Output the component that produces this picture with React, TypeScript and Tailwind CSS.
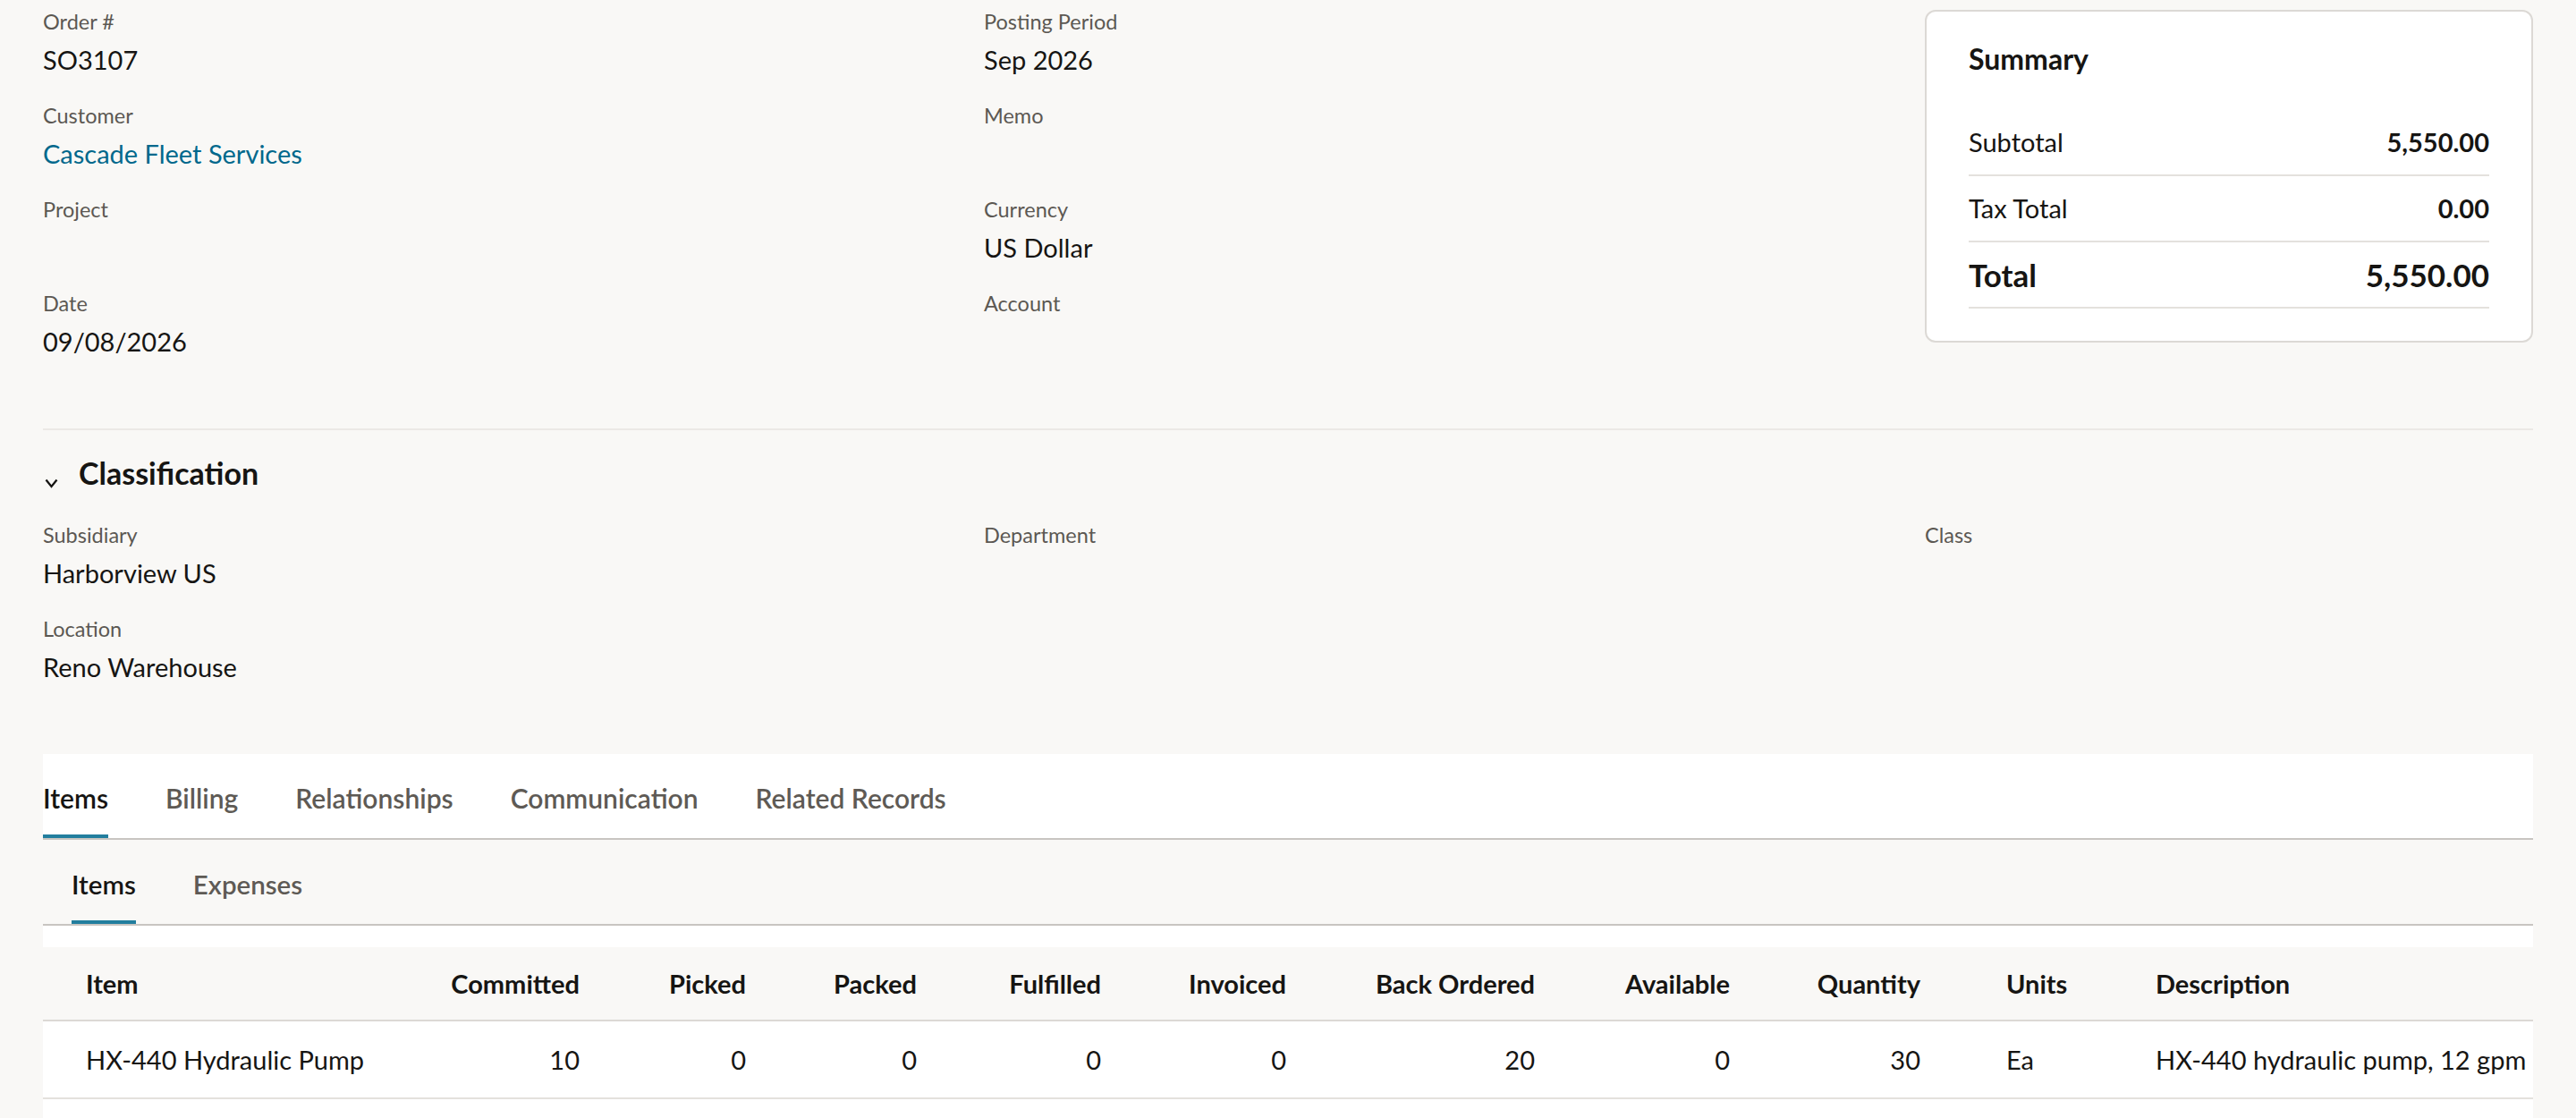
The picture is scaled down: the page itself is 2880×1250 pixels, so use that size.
import React, { useState } from 'react';

const font = "font-['Lato','Liberation_Sans',sans-serif]";

interface FieldProps {
  label: string;
  value?: string;
  link?: boolean;
}

const Field: React.FC<FieldProps> = ({ label, value, link }) => (
  <div className="mb-[26px]">
    <div className="text-[23.5px] leading-[32px] text-[#5c5853]">{label}</div>
    <div
      className={`mt-[7px] min-h-[40px] text-[29px] leading-[40px] ${
        link ? 'text-[#00688c]' : 'text-[#161513]'
      }`}
    >
      {value}
    </div>
  </div>
);

const SummaryRow: React.FC<{ label: string; value: string; total?: boolean }> = ({ label, value, total }) => (
  <div className="flex items-center justify-between border-b-2 border-[#e4e1dd] py-4">
    <span className={total ? 'text-[35px] leading-[40px] font-bold' : 'text-[29px] leading-[40px]'}>{label}</span>
    <span className={total ? 'text-[35px] leading-[40px] font-bold' : 'text-[29px] leading-[40px] font-bold'}>{value}</span>
  </div>
);

const columns = [
  { key: 'item', label: 'Item', width: 'w-[405px]', align: 'text-left' },
  { key: 'committed', label: 'Committed', width: 'w-[243px]', align: 'text-right' },
  { key: 'picked', label: 'Picked', width: 'w-[186px]', align: 'text-right' },
  { key: 'packed', label: 'Packed', width: 'w-[191px]', align: 'text-right' },
  { key: 'fulfilled', label: 'Fulfilled', width: 'w-[206px]', align: 'text-right' },
  { key: 'invoiced', label: 'Invoiced', width: 'w-[207px]', align: 'text-right' },
  { key: 'backOrdered', label: 'Back Ordered', width: 'w-[278px]', align: 'text-right' },
  { key: 'available', label: 'Available', width: 'w-[218px]', align: 'text-right' },
  { key: 'quantity', label: 'Quantity', width: 'w-[213px]', align: 'text-right' },
  { key: 'units', label: 'Units', width: 'w-[167px]', align: 'text-left' },
  { key: 'description', label: 'Description', width: 'w-[512px]', align: 'text-left' },
];

const lines: Record<string, string>[] = [
  {
    item: 'HX-440 Hydraulic Pump',
    committed: '10',
    picked: '0',
    packed: '0',
    fulfilled: '0',
    invoiced: '0',
    backOrdered: '20',
    available: '0',
    quantity: '30',
    units: 'Ea',
    description: 'HX-440 hydraulic pump, 12 gpm',
  },
];

const mainTabs = ['Items', 'Billing', 'Relationships', 'Communication', 'Related Records'];
const subTabs = ['Items', 'Expenses'];

export default function App() {
  const [tab, setTab] = useState('Items');
  const [subTab, setSubTab] = useState('Items');

  return (
    <div className={`min-h-screen bg-[#f9f8f6] px-12 pt-2 text-[#161513] ${font}`}>
      {/* Primary info */}
      <div className="grid grid-cols-[680px_680px_680px] justify-between">
        <div>
          <Field label="Order #" value="SO3107" />
          <Field label="Customer" value="Cascade Fleet Services" link />
          <Field label="Project" />
          <Field label="Date" value="09/08/2026" />
        </div>
        <div>
          <Field label="Posting Period" value="Sep 2026" />
          <Field label="Memo" />
          <Field label="Currency" value="US Dollar" />
          <Field label="Account" />
        </div>
        <div className="mt-[3px] self-start rounded-xl border-2 border-[#dcd9d5] bg-white px-[47px] pt-[33px] pb-[36px]">
          <h3 className="mb-[37px] text-[32px] leading-[40px] font-bold">Summary</h3>
          <SummaryRow label="Subtotal" value="5,550.00" />
          <SummaryRow label="Tax Total" value="0.00" />
          <SummaryRow label="Total" value="5,550.00" total />
        </div>
      </div>

      <div className="mt-[51px] h-[2px] bg-[#ebe9e6]" />

      {/* Classification */}
      <div className="mt-[28px] flex items-start gap-[23px]">
        <svg width="15" height="11" viewBox="0 0 15 11" className="mt-[26px] ml-[2px]">
          <path d="M1.5 1.5 L7.5 9 L13.5 1.5" fill="none" stroke="#161513" strokeWidth="2.3" />
        </svg>
        <h2 className="text-[34px] leading-[40px] font-bold">Classification</h2>
      </div>
      <div className="mt-[33px] grid grid-cols-[680px_680px_680px] justify-between">
        <div>
          <Field label="Subsidiary" value="Harborview US" />
          <Field label="Location" value="Reno Warehouse" />
        </div>
        <div>
          <Field label="Department" />
        </div>
        <div>
          <Field label="Class" />
        </div>
      </div>

      {/* Tabs */}
      <div className="mt-[51px] bg-white">
        <div className="flex gap-[64px] border-b-2 border-[#c8c5c1]">
          {mainTabs.map((t) => (
            <button
              key={t}
              onClick={() => setTab(t)}
              className={`h-[94px] border-b-4 pt-[7px] text-[30px] leading-[40px] font-semibold ${
                tab === t ? 'border-[#227e9e] text-[#161513]' : 'border-transparent text-[#5e5a55]'
              }`}
            >
              {t}
            </button>
          ))}
        </div>

        <div className="flex gap-[64px] border-b-2 border-[#c8c5c1] bg-[#f9f8f6] pl-8">
          {subTabs.map((t) => (
            <button
              key={t}
              onClick={() => setSubTab(t)}
              className={`h-[94px] border-b-4 pt-[10px] text-[29.5px] leading-[40px] font-semibold ${
                subTab === t ? 'border-[#227e9e] text-[#161513]' : 'border-transparent text-[#5e5a55]'
              }`}
            >
              {t}
            </button>
          ))}
        </div>

        <div className="overflow-hidden pt-6">
          <table className="w-[2826px] table-fixed border-collapse">
            <colgroup>
              {columns.map((c) => (
                <col key={c.key} className={c.width} />
              ))}
            </colgroup>
            <thead>
              <tr className="h-[82px] border-b-2 border-[#dcd9d5] bg-[#f9f8f6]">
                {columns.map((c) => (
                  <th key={c.key} className={`px-12 text-[29px] leading-[40px] font-bold whitespace-nowrap ${c.align}`}>
                    {c.label}
                  </th>
                ))}
              </tr>
            </thead>
            <tbody>
              {lines.map((row, i) => (
                <tr key={i} className="h-[87px] border-b-2 border-[#e4e1dd]">
                  {columns.map((c) => (
                    <td key={c.key} className={`px-12 text-[29px] leading-[40px] whitespace-nowrap ${c.align}`}>
                      {row[c.key]}
                    </td>
                  ))}
                </tr>
              ))}
            </tbody>
          </table>
          <div className="h-16" />
        </div>
      </div>
    </div>
  );
}
